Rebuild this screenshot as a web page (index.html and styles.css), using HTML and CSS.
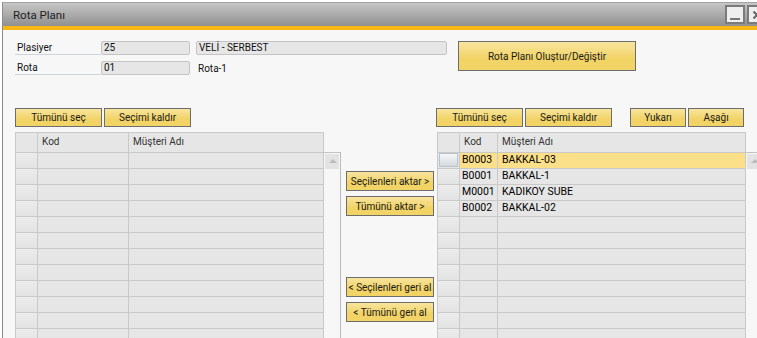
FILE: index.html
```html
<!DOCTYPE html>
<html lang="tr">
<head>
  <meta charset="UTF-8" />
  <title>Rota Planı</title>
  <link rel="stylesheet" href="styles.css">
</head>
<body>
  <div class="window">
    <div class="titlebar">
      <span class="title">Rota Planı</span>
      <div class="win-btns">
        <span class="wbtn min"></span>
        <span class="wbtn close"></span>
      </div>
    </div>
    <div class="accent"></div>

    <div class="content">
      <div class="head">
        <div class="fields">
          <div class="frow">
            <span class="lbl">Plasiyer</span>
            <span class="fld code">25</span>
            <span class="fld name">VELİ - SERBEST</span>
          </div>
          <div class="frow">
            <span class="lbl">Rota</span>
            <span class="fld code">01</span>
            <span class="txt">Rota-1</span>
          </div>
        </div>
        <button class="btn big">Rota Planı Oluştur/Değiştir</button>
      </div>

      <div class="lists">
        <div class="side left">
          <div class="toolbar">
            <button class="btn">Tümünü seç</button>
            <button class="btn">Seçimi kaldır</button>
          </div>
          <div class="gridbox">
            <div class="grid grid-left">
              <div class="row hdr"><span class="rh"></span><span>Kod</span><span>Müşteri Adı</span></div>
              <div class="row"><span class="rh"></span><span></span><span></span></div>
              <div class="row"><span class="rh"></span><span></span><span></span></div>
              <div class="row"><span class="rh"></span><span></span><span></span></div>
              <div class="row"><span class="rh"></span><span></span><span></span></div>
              <div class="row"><span class="rh"></span><span></span><span></span></div>
              <div class="row"><span class="rh"></span><span></span><span></span></div>
              <div class="row"><span class="rh"></span><span></span><span></span></div>
              <div class="row"><span class="rh"></span><span></span><span></span></div>
              <div class="row"><span class="rh"></span><span></span><span></span></div>
              <div class="row"><span class="rh"></span><span></span><span></span></div>
              <div class="row"><span class="rh"></span><span></span><span></span></div>
              <div class="row"><span class="rh"></span><span></span><span></span></div>
            </div>
            <div class="vscroll"><span class="up"></span></div>
          </div>
        </div>

        <div class="middle">
          <button class="btn mid">Seçilenleri aktar &gt;</button>
          <button class="btn mid">Tümünü aktar &gt;</button>
          <button class="btn mid push">&lt; Seçilenleri geri al</button>
          <button class="btn mid">&lt; Tümünü geri al</button>
        </div>

        <div class="side right">
          <div class="toolbar">
            <button class="btn">Tümünü seç</button>
            <button class="btn">Seçimi kaldır</button>
            <button class="btn small gap">Yukarı</button>
            <button class="btn small">Aşağı</button>
          </div>
          <div class="gridbox">
            <div class="grid grid-right">
              <div class="row hdr"><span class="rh"></span><span>Kod</span><span>Müşteri Adı</span></div>
              <div class="row sel"><span class="rh"><span class="cur"></span></span><span>B0003</span><span>BAKKAL-03</span></div>
              <div class="row"><span class="rh"></span><span>B0001</span><span>BAKKAL-1</span></div>
              <div class="row"><span class="rh"></span><span>M0001</span><span>KADIKOY SUBE</span></div>
              <div class="row"><span class="rh"></span><span>B0002</span><span>BAKKAL-02</span></div>
              <div class="row"><span class="rh"></span><span></span><span></span></div>
              <div class="row"><span class="rh"></span><span></span><span></span></div>
              <div class="row"><span class="rh"></span><span></span><span></span></div>
              <div class="row"><span class="rh"></span><span></span><span></span></div>
              <div class="row"><span class="rh"></span><span></span><span></span></div>
              <div class="row"><span class="rh"></span><span></span><span></span></div>
              <div class="row"><span class="rh"></span><span></span><span></span></div>
              <div class="row"><span class="rh"></span><span></span><span></span></div>
            </div>
            <div class="vscroll"><span class="up"></span></div>
          </div>
        </div>
      </div>
    </div>
  </div>
</body>
</html>
```

FILE: styles.css
```css
:root {
  --page: #f7f7f7;
  --cell: #e6e6e6;
  --line: #c9c9c9;
  --btn-top: #f8e59e;
  --btn-bottom: #f1d366;
  --btn-border: #6d6d6d;
  --selected: #fcdf89;
  --accent: #f8b614;
}

* {
  margin: 0;
  padding: 0;
  box-sizing: border-box;
}

body {
  font-family: Roboto, 'Liberation Sans', Arial, sans-serif;
  font-size: 10px;
  color: #111;
  background: #fff;
  width: 757px;
  height: 338px;
  overflow: hidden;
}

.window {
  margin: 2px 0 0 2px;
  height: 336px;
  border-left: 1px solid #8c8c8c;
  border-top: 1px solid #a3a3a3;
  background: var(--page);
  overflow: hidden;
}

/* title bar */
.titlebar {
  height: 23px;
  display: flex;
  align-items: center;
  padding-left: 10px;
  background: linear-gradient(#c6c6c6, #909090);
}

.title {
  font-size: 11.5px;
  color: #1e1e1e;
}

.win-btns {
  margin-left: auto;
  display: flex;
  gap: 2px;
  margin-right: -10px;
}

.wbtn {
  width: 20px;
  height: 19px;
  border: 2px solid #7b7b7b;
  background: #efefef;
  position: relative;
}

.wbtn.min::after {
  content: '';
  position: absolute;
  left: 3px;
  right: 3px;
  bottom: 2px;
  height: 2px;
  background: #777;
}

.wbtn.close::before,
.wbtn.close::after {
  content: '';
  position: absolute;
  left: 3px;
  top: 7px;
  width: 10px;
  height: 2px;
  background: #666;
  transform: rotate(45deg);
}

.wbtn.close::after {
  transform: rotate(-45deg);
}

.accent {
  height: 4px;
  background: var(--accent);
}

.content {
  padding: 11px 0 0 12px;
}

/* header form */
.head {
  display: flex;
  align-items: flex-start;
}

.frow {
  display: flex;
  align-items: center;
  height: 14px;
}

.frow + .frow {
  margin-top: 6px;
}

.lbl {
  width: 86px;
  height: 14px;
  line-height: 13px;
  padding-left: 2px;
  border-bottom: 1px solid #cdd4dc;
}

.fld {
  height: 14px;
  line-height: 12px;
  padding-left: 2px;
  background: var(--cell);
  border: 1px solid #c4c4c4;
  border-radius: 2px;
}

.fld.code {
  width: 89px;
  margin-right: 6px;
}

.fld.name {
  width: 251px;
}

.txt {
  padding-left: 2px;
}

/* buttons */
.btn {
  font-family: inherit;
  font-size: 10px;
  color: #1a1a1a;
  height: 19px;
  width: 87px;
  padding: 0;
  border: 1px solid var(--btn-border);
  background: linear-gradient(var(--btn-top), var(--btn-bottom) 60%);
  white-space: nowrap;
  overflow: hidden;
}

.btn.big {
  width: 178px;
  height: 30px;
  margin-left: 11px;
}

.btn.small {
  width: 56px;
}

.btn.gap {
  margin-left: 16px;
}

/* lists */
.lists {
  display: flex;
  margin-top: 33px;
}

.side.left {
  width: 326px;
  flex-shrink: 0;
}

.side.right {
  flex: 1;
  margin-left: -1px;
}

.toolbar {
  display: flex;
  gap: 2px;
  height: 19px;
  margin-bottom: 5px;
}

.gridbox {
  display: flex;
}

.side.right .gridbox {
  margin-left: 1px;
}

/* grids */
.grid {
  width: 309px;
  flex-shrink: 0;
  border-top: 1px solid var(--line);
  border-left: 1px solid var(--line);
  background: var(--cell);
}

.row {
  display: grid;
  height: 16px;
}

.grid-left .row {
  grid-template-columns: 22px 91px 1fr;
}

.grid-right .row {
  grid-template-columns: 22px 38px 1fr;
}

.row > span {
  border-right: 1px solid var(--line);
  border-bottom: 1px solid var(--line);
  padding-left: 4px;
  line-height: 14px;
  font-size: 10.5px;
  color: #000;
  white-space: nowrap;
  overflow: hidden;
}

.row > span:nth-child(2) {
  padding-left: 2px;
}

.row.hdr {
  height: 20px;
}

.row.hdr > span {
  line-height: 18px;
  font-size: 10px;
  color: #333;
  padding-left: 4px;
}

.row > span.rh {
  padding: 0;
  background: linear-gradient(#ececec, #e3e3e3);
}

.row.hdr > span.rh {
  background: var(--cell);
}

.row.sel > span {
  background: var(--selected);
}

.row.sel > span.rh {
  background: var(--cell);
  padding: 0 1px;
}

.cur {
  display: block;
  height: 14px;
  border: 1px solid #bcc3ca;
  background: linear-gradient(#f7f8fa, #d2d8de);
}

.vscroll {
  width: 18px;
  margin-top: 20px;
  height: 200px;
  border-top: 1px solid #c2c2c2;
  border-right: 1px solid #bcbcbc;
  padding: 1px;
}

.up {
  display: block;
  height: 15px;
  background: #e3e3e3;
  position: relative;
}

.up::after {
  content: '';
  position: absolute;
  left: 4px;
  top: 5px;
  border: 4px solid transparent;
  border-top: none;
  border-bottom: 4px solid #bdbdbd;
}

.middle {
  width: 96px;
  flex-shrink: 0;
  display: flex;
  flex-direction: column;
  align-items: flex-start;
  padding: 63px 0 0 5px;
}

.btn.mid {
  width: 88px;
  height: 20px;
  margin-bottom: 5px;
}

.btn.push {
  margin-top: 56px;
}
```
